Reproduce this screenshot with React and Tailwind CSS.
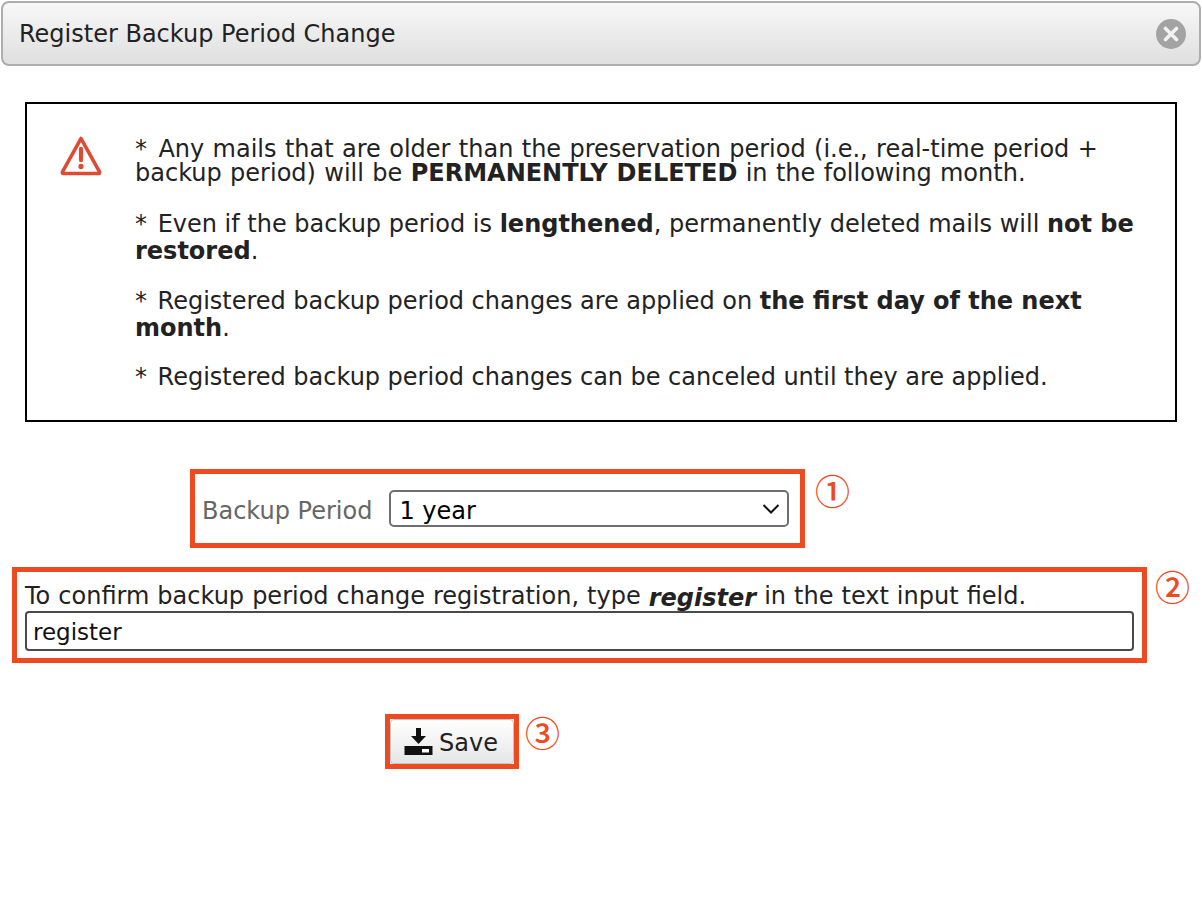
const font = { fontFamily: '"DejaVu Sans", Verdana, sans-serif' };

function Warn() {
  return (
    <svg width="42" height="42" viewBox="0 0 44 42" fill="none" preserveAspectRatio="none" className="shrink-0">
      <path d="M22 3.5 L41.5 37 a1 1 0 0 1 -1 1.5 H3.5 a1 1 0 0 1 -1 -1.5 Z" stroke="#df4a32" strokeWidth="3.6" strokeLinejoin="round" />
      <path d="M22 14 V25" stroke="#df4a32" strokeWidth="4.4" strokeLinecap="round" />
      <circle cx="22" cy="31.5" r="2.7" fill="#df4a32" />
    </svg>
  );
}

function SaveIcon() {
  return (
    <svg width="29" height="29" viewBox="0 0 29 29" className="shrink-0">
      <path d="M12 1 H17 V9 H22 L14.5 17 L7 9 H12 Z" fill="#111" />
      <rect x="0.5" y="19" width="28" height="9" fill="#111" />
      <rect x="18" y="22" width="7" height="3.5" fill="#fff" />
    </svg>
  );
}

function Mark({ children, className }) {
  return (
    <span className={`text-[35px] leading-none font-medium text-[#ee4a22] ${className}`} style={{ fontFamily: '"Noto Sans CJK JP", sans-serif' }}>
      {children}
    </span>
  );
}

function Star() {
  return <span className="tracking-[3px]">*</span>;
}

export default function App() {
  return (
    <div className="w-[1202px] h-[904px] bg-white text-[#222] text-[24px] overflow-hidden pt-px" style={font}>
      <div className="mx-px h-[65px] w-[1200px] rounded-lg border-2 border-[#adadad] bg-gradient-to-b from-[#f8f8f8] to-[#dfdfdf] flex items-center justify-between pl-[16px] pr-[13px]">
        <span className="text-[24px] text-[#222]">Register Backup Period Change</span>
        <span className="w-[30px] h-[30px] rounded-full bg-[#a3a3a3] flex items-center justify-center">
          <svg width="16" height="16" viewBox="0 0 16 16"><path d="M2.5 2.5 L13.5 13.5 M13.5 2.5 L2.5 13.5" stroke="#f2f2f2" strokeWidth="3.6" strokeLinecap="round" /></svg>
        </span>
      </div>

      <div className="mt-[36px] ml-[25px] w-[1152px] h-[320px] border-2 border-black flex pl-[33px] pt-[31px]">
        <Warn />
        <div className="ml-[33px] mt-[2px] w-[1010px]">
          <p className="leading-[24px] [word-spacing:0.75px]"><Star /> Any mails that are older than the preservation period (i.e., real-time period + backup period) will be <b>PERMANENTLY DELETED</b> in the following month.</p>
          <p className="mt-[26px] leading-[27px]"><Star /> Even if the backup period is <b>lengthened</b>, permanently deleted mails will <b>not be restored</b>.</p>
          <p className="mt-[23px] leading-[27px] [word-spacing:-0.1px]"><Star /> Registered backup period changes are applied on <b>the first day of the next month</b>.</p>
          <p className="mt-[22px] leading-[27px] [word-spacing:-0.1px]"><Star /> Registered backup period changes can be canceled until they are applied.</p>
        </div>
      </div>

      <div className="mt-[47px] ml-[190px] flex items-start">
        <div className="w-[615px] h-[79px] border-[5px] border-[#ee4a22] flex items-center pl-[7px]">
          <span className="text-[#666] mt-[4px] mr-[1px]">Backup Period</span>
          <div className="ml-[16px] w-[400px] h-[37px] rounded-[5px] border-2 border-[#6f6f6f] flex items-center justify-between pl-[8px] pr-[7px] text-black">
            <span className="mt-[4px]">1 year</span>
            <svg width="18" height="12" viewBox="0 0 18 12" fill="none"><path d="M1.5 2 L9 9.5 L16.5 2" stroke="#111" strokeWidth="2" /></svg>
          </div>
        </div>
        <Mark className="ml-[10px] mt-[3px]">①</Mark>
      </div>

      <div className="mt-[19px] ml-[12px] flex items-start">
        <div className="w-[1135px] h-[96px] border-[5px] border-[#ee4a22] pl-[8px] pt-[9px]">
          <div className="leading-[30px] h-[30px] whitespace-nowrap [word-spacing:0.4px]">To confirm backup period change registration, type <b className="align-[-2px]"><i>register</i></b> in the text input field.</div>
          <div className="w-[1109px] h-[40px] rounded-[4px] border-2 border-[#4a4a4a] flex items-center pl-[6px] text-[23px] text-[#111]"><span className="mt-[3px]">register</span></div>
        </div>
        <Mark className="ml-[8px] mt-[1px]">②</Mark>
      </div>

      <div className="mt-[51px] ml-[385px] flex items-start">
        <div className="w-[134px] h-[55px] border-[5px] border-[#ee4a22]">
          <div className="w-full h-full rounded-[4px] border border-[#c4c4c4] bg-gradient-to-b from-white to-[#e6e6e6] flex items-center justify-center gap-[6px] pr-[2px]">
            <SaveIcon />
            <span className="mt-[2px]">Save</span>
          </div>
        </div>
        <Mark className="ml-[6px]">③</Mark>
      </div>
    </div>
  );
}
